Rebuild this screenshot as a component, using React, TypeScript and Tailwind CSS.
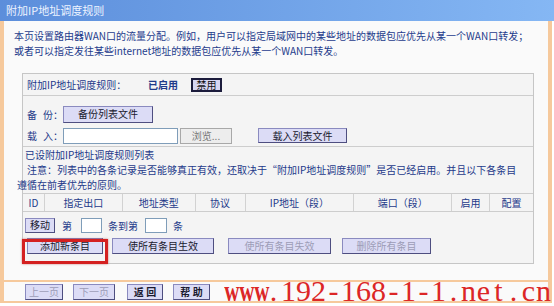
import React from "react";

const FONT = { fontFamily: '"Noto Sans CJK SC", "Noto Sans", sans-serif' };

function Btn({
  children,
  className = "",
  disabled = false,
}: {
  children: React.ReactNode;
  className?: string;
  disabled?: boolean;
}) {
  return (
    <div
      className={
        "flex items-center justify-center border border-[#8a8abf] border-r-[#4e4e80] border-b-[#4e4e80] bg-[#dcdcf6] text-[10px] leading-none " +
        (disabled ? "text-[#9c9cb6] " : "text-[#1a1a2e] ") +
        className
      }
    >
      {children}
    </div>
  );
}

function Input({ className = "" }: { className?: string }) {
  return <div className={"bg-white border border-[#7f9db9] " + className} />;
}

const cols: [string, number][] = [
  ["ID", 22],
  ["指定出口", 78],
  ["地址类型", 73],
  ["协议", 50],
  ["IP地址（段）", 109],
  ["端口（段）", 98],
  ["启用", 38],
  ["配置", 43],
];

const WATERMARK = "192-168-1-1.net.cn";

export default function App() {
  return (
    <div
      className="relative w-[554px] h-[306px] overflow-hidden bg-white text-[#1e3a8a]"
      style={FONT}
    >
      {/* title bar */}
      <div className="h-[21px] bg-gradient-to-r from-[#5c8edb] to-[#85b7f4] flex items-center pl-[6px] text-[11px] text-[#eef4ff]">
        附加IP地址调度规则
      </div>

      <div className="w-[552px] border-x-[4px] border-[#f6c99c] bg-[#fafafa]">
        {/* main */}
        <div className="h-[259px] pt-[7px] pl-[10px]">
          <div className="text-[10px] leading-[15px] text-[#1f3c8c] whitespace-nowrap">
            <div>本页设置路由器WAN口的流量分配。例如，用户可以指定局域网中的某些地址的数据包应优先从某一个WAN口转发；</div>
            <div>或者可以指定发往某些internet地址的数据包应优先从某一个WAN口转发。</div>
          </div>

          {/* box */}
          <div className="relative ml-[8px] mt-[15px] w-[512px] h-[191px] border border-[#c6c6c6] bg-[#f4f4f4] text-[10px]">
            {/* row 1 */}
            <div className="h-[22px] flex items-center border-b border-[#cdcdcd] pl-[4px]">
              <span className="w-[121px]">附加IP地址调度规则：</span>
              <span className="font-bold w-[43px]">已启用</span>
              <div className="h-[14px] w-[31px] flex items-center justify-center border-2 border-[#1c1c3c] bg-[#d6d6f2] text-[#111] leading-none">
                禁用
              </div>
            </div>

            {/* backup / load */}
            <div className="h-[51px] border-b border-[#cdcdcd] pl-[4px] pt-[9px] flex flex-col gap-[4px]">
              <div className="h-[18px] flex items-center">
                <span className="w-[36px] flex">
                  <span>备</span>
                  <span className="ml-[6px]">份：</span>
                </span>
                <Btn className="w-[90px] h-[17px]">备份列表文件</Btn>
              </div>
              <div className="h-[17px] flex items-center">
                <span className="w-[36px] flex">
                  <span>载</span>
                  <span className="ml-[6px]">入：</span>
                </span>
                <Input className="w-[115px] h-[16px]" />
                <div className="ml-[2px] w-[52px] h-[16px] flex items-center justify-center border border-[#a8a8a8] bg-[#ededed] text-[#777] leading-none">
                  浏览...
                </div>
                <Btn className="ml-[26px] w-[89px] h-[15px]">载入列表文件</Btn>
              </div>
            </div>

            {/* list section */}
            <div className="leading-[15px] whitespace-nowrap">
              <div className="pl-[2px]">已设附加IP地址调度规则列表</div>
              <div className="pl-[4px]">
                注意：列表中的各条记录是否能够真正有效，还取决于“附加IP地址调度规则”是否已经启用。并且以下各条目
              </div>
              <div className="ml-[-6px]">遵循在前者优先的原则。</div>
            </div>

            {/* header */}
            <div className="mt-[1px] h-[19px] flex border-y border-[#cdcdcd]">
              {cols.map(([t, w], i) => (
                <div
                  key={t}
                  className={
                    "flex items-center justify-center " +
                    (i < cols.length - 1 ? "border-r border-[#d2d2d2]" : "")
                  }
                  style={{ width: w }}
                >
                  {t}
                </div>
              ))}
            </div>

            {/* move row */}
            <div className="h-[25px] flex items-center pl-[2px] pt-[1px]">
              <Btn className="w-[30px] h-[15px]">移动</Btn>
              <span className="ml-[7px]">第</span>
              <Input className="ml-[9px] w-[21px] h-[15px]" />
              <span className="ml-[6px]">条到第</span>
              <Input className="ml-[7px] w-[22px] h-[15px]" />
              <span className="ml-[6px]">条</span>
            </div>

            {/* action row */}
            <div className="h-[20px] flex items-start pl-[4px] pt-[1px]">
              <Btn className="w-[76px] h-[16px]">添加新条目</Btn>
              <Btn className="ml-[9px] w-[102px] h-[16px]">使所有条目生效</Btn>
              <Btn disabled className="ml-[14px] w-[103px] h-[16px]">使所有条目失效</Btn>
              <Btn disabled className="ml-[11px] w-[89px] h-[16px]">删除所有条目</Btn>
            </div>

            {/* red highlight annotation */}
            <div className="absolute left-[-1px] top-[165px] w-[86px] h-[25px] border-[3px] border-[#d42020] shadow-[0_0_2px_rgba(160,0,0,0.5)]" />
          </div>
        </div>

        {/* footer */}
        <div className="h-[23px] border-y-2 border-[#f6c99c] flex items-center pl-[21px] gap-[10px]">
          <Btn disabled className="w-[38px] h-[16px]">上一页</Btn>
          <Btn disabled className="w-[42px] h-[16px]">下一页</Btn>
          <Btn className="ml-[2px] w-[36px] h-[16px] font-bold">返 回</Btn>
          <Btn className="w-[37px] h-[16px] font-bold">帮 助</Btn>
        </div>
      </div>

      {/* watermark overlay */}
      <div
        className="absolute left-[221px] top-[276px] flex text-[30px] leading-[30px] text-[#dc2626]"
        style={{ fontFamily: '"Liberation Serif", serif' }}
      >
        {"www".split("").map((c, i) => (
          <span key={"w" + i} className="inline-block w-[15px] text-center overflow-visible">
            <span className="inline-block font-bold scale-x-[0.7]">{c}</span>
          </span>
        ))}
        {("." + WATERMARK).split("").map((c, i) => (
          <span key={i} className="inline-block w-[15px] text-center">
            {c}
          </span>
        ))}
      </div>
    </div>
  );
}
